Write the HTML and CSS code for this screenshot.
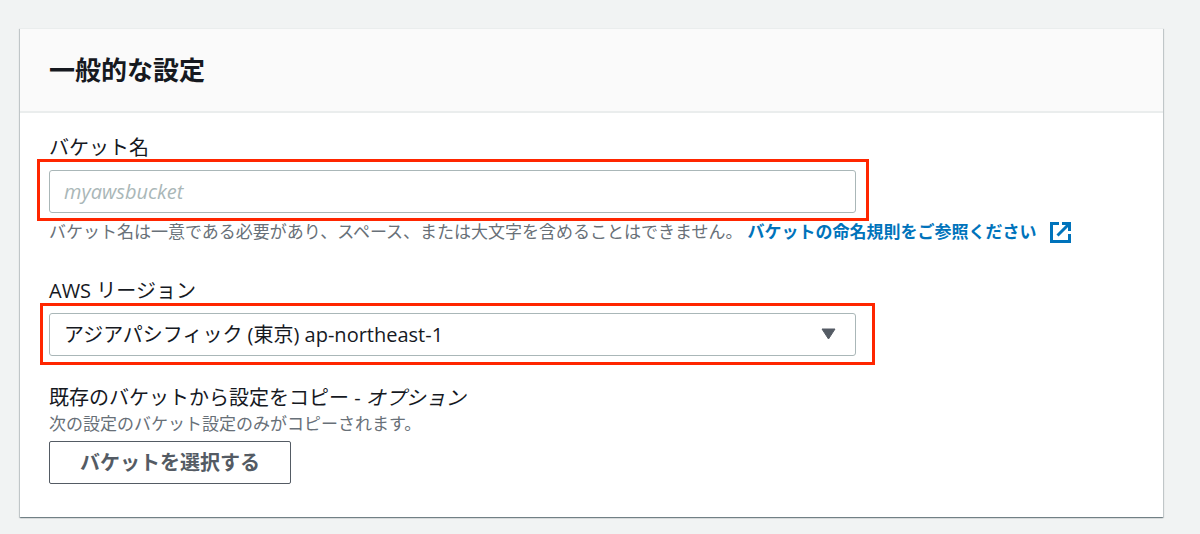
FILE: index.html
```html
<!DOCTYPE html>
<html lang="ja">
<head>
  <meta charset="UTF-8">
  <meta name="viewport" content="width=device-width, initial-scale=1.0">
  <title>バケットを作成</title>
  <link rel="stylesheet" href="styles.css">
</head>
<body>

  <section class="panel">
    <header class="panel-header">
      <h2>一般的な設定</h2>
    </header>

    <form class="panel-body">
      <div class="field">
        <label for="bucket-name">バケット名</label>
        <div class="control marked marked-name">
          <input type="text" id="bucket-name" placeholder="myawsbucket">
        </div>
        <p class="hint name-hint">バケット名は一意である必要があり、スペース、または大文字を含めることはできません。<a href="#">バケットの命名規則をご参照ください<svg class="external" viewBox="0 0 21 21" aria-hidden="true"><path d="M9 1.500H1.500v18h18V12M12 1.500h7.500V9M19 2L7.500 13.500"/></svg></a></p>
      </div>

      <div class="field">
        <label for="region">AWS リージョン</label>
        <div class="control marked marked-region">
          <select id="region">
            <option>アジアパシフィック (東京) ap-northeast-1</option>
          </select>
          <svg class="caret" viewBox="0 0 15 12" aria-hidden="true"><path d="M1 1h13L7.500 11z"/></svg>
        </div>
      </div>

      <div class="field">
        <label for="choose-bucket">既存のバケットから設定をコピー - <em>オプション</em></label>
        <p class="hint">次の設定のバケット設定のみがコピーされます。</p>
        <button type="button" id="choose-bucket">バケットを選択する</button>
      </div>
    </form>
  </section>

</body>
</html>
```
FILE: styles.css
```css
* {
  box-sizing: border-box;
}

body {
  margin: 0;
  padding: 28px 37px 16px 20px;
  background-color: #f1f3f3;
  color: #16191f;
  font-family: "Open Sans", "Noto Sans CJK JP", sans-serif;
  font-size: 20px;
  line-height: 26px;
}

.panel {
  background-color: #fff;
  border-top: 1px solid #eaeded;
  box-shadow: 0 1px 1px rgba(0, 28, 36, 0.35), 1px 1px 1px rgba(0, 28, 36, 0.15), -1px 1px 1px rgba(0, 28, 36, 0.15);
}

.panel-header {
  padding: 25px 29px;
  background-color: #fafafa;
  border-bottom: 2px solid #eaeded;
}

.panel-header h2 {
  margin: 0;
  font-size: 26px;
  line-height: 32px;
}

.panel-body {
  display: flex;
  flex-direction: column;
  gap: 29px;
  padding: 22px 29px 33px;
}

.field label {
  display: block;
}

.control {
  position: relative;
  max-width: 807px;
  margin-top: 9px;
}

.control input,
.control select {
  display: block;
  width: 100%;
  height: 43px;
  padding: 0 14px;
  border: 1px solid #aab7b8;
  border-radius: 3px;
  background-color: #fff;
  color: inherit;
  font: inherit;
}

.control select {
  appearance: none;
}

.control input::placeholder {
  color: #aab7b8;
  font-style: italic;
  opacity: 1;
}

.caret {
  position: absolute;
  top: 15px;
  right: 20px;
  width: 15px;
  height: 12px;
  fill: #545b64;
  stroke: #545b64;
  stroke-width: 1;
  stroke-linejoin: round;
  pointer-events: none;
}

/* red frames around the fields to fill in */
.marked::after {
  content: "";
  position: absolute;
  border: 3px solid #ff2600;
  pointer-events: none;
}

.marked-name::after {
  inset: -11px -13px -8px -12px;
}

.marked-region::after {
  inset: -10px -19px -9px -9px;
}

.hint {
  margin: 0;
  color: #687078;
  font-size: 17px;
}

.name-hint {
  margin: 6px 0 4px;
}

.hint a {
  margin-left: 5px;
  color: #0073bb;
  font-weight: 700;
  text-decoration: none;
}

.external {
  width: 21px;
  height: 21px;
  margin-left: 13px;
  vertical-align: -5px;
  fill: none;
  stroke: currentColor;
  stroke-width: 3;
}

button {
  height: 43px;
  margin-top: 4px;
  padding: 0 30px;
  border: 1px solid #545b64;
  border-radius: 2px;
  background-color: #fff;
  color: #545b64;
  font: inherit;
  font-weight: 700;
  cursor: pointer;
}
```
